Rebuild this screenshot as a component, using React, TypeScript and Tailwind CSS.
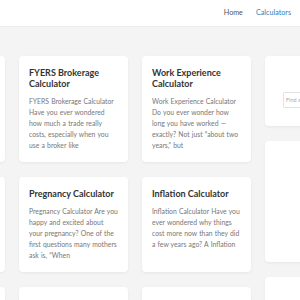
import React from "react";

const CARDS = [
  {
    title: "Loan EMI Calculator",
    text: "Loan EMI Calculator Have you ever wondered how much you will pay every month for your loan",
  },
  {
    title: "FYERS Brokerage Calculator",
    text: "FYERS Brokerage Calculator Have you ever wondered how much a trade really costs, especially when you use a broker like",
  },
  {
    title: "Work Experience Calculator",
    text: "Work Experience Calculator Do you ever wonder how long you have worked — exactly? Not just “about two years,” but",
  },
  {
    title: "Age Calculator",
    text: "Age Calculator Have you ever wanted to know your exact age in years, months and days?",
  },
  {
    title: "Pregnancy Calculator",
    text: "Pregnancy Calculator Are you happy and excited about your pregnancy? One of the first questions many mothers ask is, “When",
  },
  {
    title: "Inflation Calculator",
    text: "Inflation Calculator Have you ever wondered why things cost more now than they did a few years ago? A Inflation",
  },
  {
    title: "SIP Calculator",
    text: "SIP Calculator Want to know how your monthly investments grow over time?",
  },
  {
    title: "Cash Denomination Calculator",
    text: "Cash Denomination Calculator Counting notes by hand can be slow and tiring.",
  },
  {
    title: "Car Insurance Calculator",
    text: "Car Insurance Calculator Have you ever wondered how much your car insurance will cost?",
  },
];

export default function App() {
  return (
    <div className="w-[300px] h-[300px] overflow-hidden bg-[#f4f4f4] font-['Lato',sans-serif]">
      {/* Top nav */}
      <header className="h-[27px] bg-white border-b border-[#ececec] flex items-center justify-end pr-[9px] gap-[13px] text-[7.2px]">
        <a className="text-[#555]">Home</a>
        <a className="text-[#2f7fc1]">Calculators</a>
      </header>

      <main className="flex gap-[14px] pt-[29px] ml-[-104px] w-[600px]">
        <div className="grid grid-cols-[109px_109px_109px] gap-x-[14px] gap-y-[15px] shrink-0">
          {CARDS.map((c) => (
            <div
              key={c.title}
              className="bg-white rounded-[4px] shadow-[0_1px_3px_rgba(0,0,0,0.06)] px-[10px] pt-[11px] pb-[11px]"
            >
              <h3 className="text-[9px] leading-[11px] font-bold text-[#333] mb-[7px]">
                {c.title}
              </h3>
              <p className="text-[6.8px] leading-[11px] [word-spacing:0.45px] text-[#777]">{c.text}</p>
            </div>
          ))}
        </div>

        <aside className="w-[94px] shrink-0 flex flex-col gap-[15px]">
          <div className="bg-white rounded-[4px] shadow-[0_1px_3px_rgba(0,0,0,0.06)] h-[70px] px-[18px] pt-[16px]">
            <h4 className="text-[8px] leading-[10px] text-center text-[#bbb] font-semibold">Search</h4>
            <input
              className="mt-[10px] w-full h-[16px] border border-[#e3e3e3] rounded-[2px] px-[2px] text-[5.5px] text-[#999] placeholder:text-[#aaa] outline-none"
              placeholder="Find a calculator"
            />
          </div>
          <div className="bg-white rounded-[4px] shadow-[0_1px_3px_rgba(0,0,0,0.06)] h-[121px]" />
          <div className="bg-white rounded-[4px] shadow-[0_1px_3px_rgba(0,0,0,0.06)] h-[100px]" />
        </aside>
      </main>
    </div>
  );
}
